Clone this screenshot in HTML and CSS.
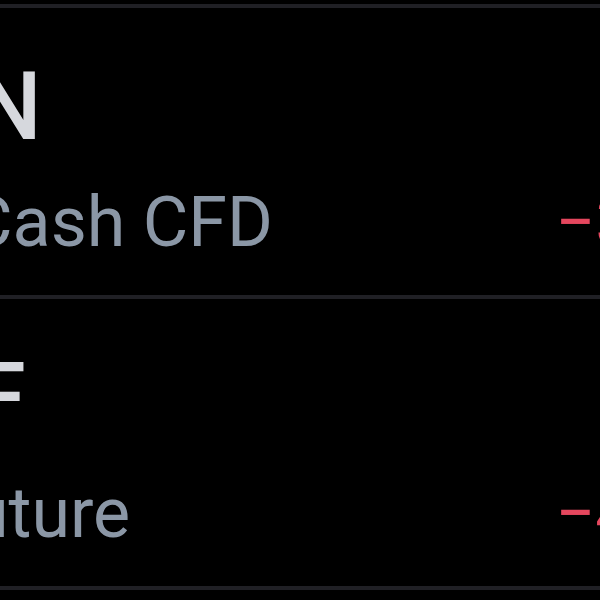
FILE: index.html
```html
<!DOCTYPE html>
<html>
<head>
    <title>Markets</title>
<link rel="stylesheet" href="styles.css">
</head>
<body>
  <div class="list">
    <div class="row row-cash">
      <div class="symbol">N</div>
      <div class="line">
        <span class="name">Cash CFD</span>
        <span class="change">&minus;3.12%</span>
      </div>
    </div>
    <div class="row row-future">
      <div class="symbol">F</div>
      <div class="line">
        <span class="name">Future</span>
        <span class="change">&minus;4.08%</span>
      </div>
    </div>
    <div class="row"></div>
  </div>
</body>
</html>
```

FILE: styles.css
```css
body {
  margin: 0;
  background-color: #000;
  font-family: Roboto, "Noto Sans", sans-serif;
  overflow: hidden;
  height: 600px;
}
.list {
  padding-top: 4px;
}
.row {
  border-top: 4px solid #202025;
  padding: 52px 0 38px;
}
.symbol {
  font-size: 94px;
  font-weight: 500;
  line-height: 1;
  color: #d6d8dd;
}
.line {
  display: flex;
  justify-content: space-between;
  margin-top: 33px;
  font-size: 70px;
  line-height: 1;
}
.name {
  color: #8b97a6;
  white-space: nowrap;
}
.change {
  color: #e5475e;
  white-space: nowrap;
  margin-right: -183px;
}
.row-cash .symbol {
  margin-left: -25px;
}
.row-cash .name {
  margin-left: -33px;
}
.row-future .symbol {
  margin-left: -26px;
}
.row-future .name {
  margin-left: -68px;
}
```
